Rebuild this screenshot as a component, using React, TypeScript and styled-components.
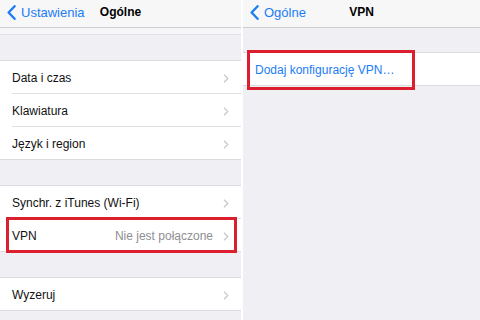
import React from "react";
import styled, { createGlobalStyle } from "styled-components";

const Global = createGlobalStyle`
  html, body { margin: 0; padding: 0; background: #ffffff; }
  body { font-family: "Liberation Sans", Arial, sans-serif; -webkit-font-smoothing: antialiased; }
  #root { width: 480px; height: 320px; overflow: hidden; }
`;

const Screen = styled.div`
  display: flex;
  width: 480px;
  height: 320px;
  gap: 2px;
  background: #ffffff;
`;

const Panel = styled.div<{ $w?: number }>`
  position: relative;
  display: flex;
  flex-direction: column;
  ${(p) => (p.$w ? `width: ${p.$w}px;` : "flex: 1;")}
  height: 320px;
  background: #efeff4;
  overflow: hidden;
`;

const NavBar = styled.div`
  position: relative;
  height: 28px;
  box-sizing: border-box;
  padding-bottom: 4px;
  flex: none;
  display: flex;
  align-items: center;
  justify-content: center;
  background: #f7f7f8;
  border-bottom: 1px solid #cfcfd3;
`;

const Back = styled.div`
  position: absolute;
  left: 7px;
  top: 0;
  height: 25px;
  display: flex;
  align-items: center;
  gap: 5px;
  color: #1a7cf6;
  font-size: 13px;
`;

const Title = styled.div`
  font-size: 12px;
  font-weight: bold;
  color: #000;
`;

const Band = styled.div`
  height: 6px;
  flex: none;
  background: #f6f6f8;
  border-bottom: 1px solid #e1e1e5;
`;

const Spacer = styled.div<{ $h: number }>`
  height: ${(p) => p.$h}px;
  flex: none;
`;

const Group = styled.div`
  flex: none;
  background: #ffffff;
  border-top: 1px solid #dcdce0;
  border-bottom: 1px solid #dcdce0;
`;

const Row = styled.div<{ $last?: boolean }>`
  position: relative;
  height: 32px;
  box-sizing: border-box;
  display: flex;
  align-items: center;
  padding: 2px 12px 0 12px;
  margin-bottom: ${(p) => (p.$last ? 0 : 1)}px;
  &::after {
    content: "";
    display: ${(p) => (p.$last ? "none" : "block")};
    position: absolute;
    left: 12px;
    right: 0;
    bottom: -1px;
    height: 1px;
    background: #e0e0e4;
  }
`;

const Label = styled.span<{ $blue?: boolean }>`
  flex: 1;
  font-size: 12px;
  color: ${(p) => (p.$blue ? "#1a7cf6" : "#111")};
  white-space: nowrap;
`;

const Detail = styled.span`
  font-size: 12px;
  color: #8e8e93;
  margin-right: 10px;
  white-space: nowrap;
`;

const Highlight = styled.div<{ $x: number; $y: number; $w: number; $h: number }>`
  position: absolute;
  left: ${(p) => p.$x}px;
  top: ${(p) => p.$y}px;
  width: ${(p) => p.$w}px;
  height: ${(p) => p.$h}px;
  box-sizing: border-box;
  border: 3px solid #dc1f2e;
  pointer-events: none;
`;

const BackChevron = () => (
  <svg width="9" height="15" viewBox="0 0 9 15">
    <polyline points="7.6,1.2 1.6,7.5 7.6,13.8" fill="none" stroke="#1a7cf6" strokeWidth="2.3" strokeLinecap="round" strokeLinejoin="round" />
  </svg>
);

const Chevron = () => (
  <svg width="6" height="9" viewBox="0 0 6 9" style={{ flex: "none", marginRight: 0 }}>
    <polyline points="1,0.8 4.8,4.5 1,8.2" fill="none" stroke="#c7c7cc" strokeWidth="1.2" />
  </svg>
);

const Item = ({ label, detail, last }: { label: string; detail?: string; last?: boolean }) => (
  <Row $last={last}>
    <Label>{label}</Label>
    {detail && <Detail>{detail}</Detail>}
    <Chevron />
  </Row>
);

export default function App() {
  return (
    <>
      <Global />
      <Screen>
        <Panel $w={241}>
          <NavBar>
            <Back>
              <BackChevron />
              <span>Ustawienia</span>
            </Back>
            <Title>Ogólne</Title>
          </NavBar>
          <Band />
          <Spacer $h={25} />
          <Group>
            <Item label="Data i czas" />
            <Item label="Klawiatura" />
            <Item label="Język i region" last />
          </Group>
          <Spacer $h={25} />
          <Group>
            <Item label="Synchr. z iTunes (Wi-Fi)" />
            <Item label="VPN" detail="Nie jest połączone" last />
          </Group>
          <Spacer $h={25} />
          <Group>
            <Item label="Wyzeruj" last />
          </Group>
          <Highlight $x={6} $y={217} $w={231} $h={36} />
        </Panel>
        <Panel>
          <NavBar>
            <Back>
              <BackChevron />
              <span>Ogólne</span>
            </Back>
            <Title>VPN</Title>
          </NavBar>
          <Spacer $h={24} />
          <Group>
            <Row $last>
              <Label $blue>Dodaj konfigurację VPN…</Label>
            </Row>
          </Group>
          <Highlight $x={4} $y={50} $w={168} $h={40} />
        </Panel>
      </Screen>
    </>
  );
}
